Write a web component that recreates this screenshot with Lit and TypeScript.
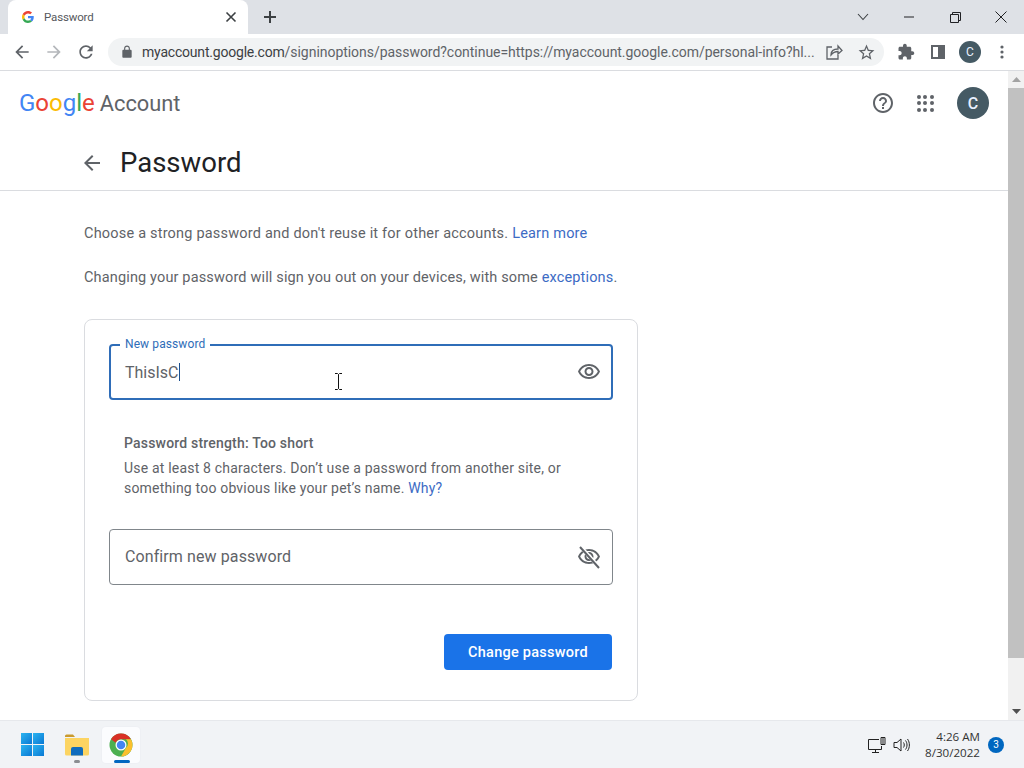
import { LitElement, html, css } from 'lit'
import { customElement } from 'lit/decorators.js'

const P = {
  back: 'M20 11H7.83l5.59-5.59L12 4l-8 8 8 8 1.41-1.41L7.83 13H20v-2z',
  forward: 'M12 4l-1.41 1.41L16.17 11H4v2h12.17l-5.58 5.59L12 20l8-8z',
  reload: 'M17.65 6.35C16.2 4.9 14.21 4 12 4c-4.42 0-7.99 3.58-7.99 8s3.57 8 7.99 8c3.73 0 6.84-2.55 7.73-6h-2.08c-.82 2.33-3.04 4-5.65 4-3.31 0-6-2.69-6-6s2.69-6 6-6c1.66 0 3.14.69 4.22 1.78L13 11h7V4l-2.35 2.35z',
  lock: 'M18 8h-1V6c0-2.76-2.24-5-5-5S7 3.24 7 6v2H6c-1.1 0-2 .9-2 2v10c0 1.1.9 2 2 2h12c1.1 0 2-.9 2-2V10c0-1.1-.9-2-2-2zM9 6c0-1.66 1.34-3 3-3s3 1.34 3 3v2H9V6z',
  star: 'M22 9.24l-7.19-.62L12 2 9.19 8.63 2 9.24l5.46 4.73L5.82 21 12 17.27 18.18 21l-1.63-7.03L22 9.24zM12 15.4l-3.76 2.27 1-4.28-3.32-2.88 4.38-.38L12 6.1l1.71 4.04 4.38.38-3.32 2.88 1 4.28L12 15.4z',
  ext: 'M20.5 11H19V7c0-1.1-.9-2-2-2h-4V3.5C13 2.12 11.88 1 10.5 1S8 2.12 8 3.5V5H4c-1.1 0-1.99.9-1.99 2v3.8H3.5c1.49 0 2.7 1.21 2.7 2.7s-1.21 2.7-2.7 2.7H2V20c0 1.1.9 2 2 2h3.8v-1.5c0-1.49 1.21-2.7 2.7-2.7 1.49 0 2.7 1.21 2.7 2.7V22H17c1.1 0 2-.9 2-2v-4h1.5c1.38 0 2.5-1.12 2.5-2.5S21.88 11 20.5 11z',
  help: 'M11 18h2v-2h-2v2zm1-16C6.48 2 2 6.48 2 12s4.48 10 10 10 10-4.48 10-10S17.52 2 12 2zm0 18c-4.41 0-8-3.59-8-8s3.59-8 8-8 8 3.59 8 8-3.59 8-8 8zm0-14c-2.21 0-4 1.79-4 4h2c0-1.1.9-2 2-2s2 .9 2 2c0 2-3 1.75-3 5h2c0-2.25 3-2.5 3-5 0-2.21-1.79-4-4-4z',
  eye: 'M12 6c3.79 0 7.17 2.13 8.82 5.5C19.17 14.87 15.79 17 12 17s-7.17-2.13-8.82-5.5C4.83 8.13 8.21 6 12 6m0-2C7 4 2.73 7.11 1 11.5 2.73 15.89 7 19 12 19s9.27-3.11 11-7.5C21.27 7.11 17 4 12 4zm0 5c1.38 0 2.5 1.12 2.5 2.5S13.38 14 12 14s-2.5-1.12-2.5-2.5S10.62 9 12 9m0-2c-2.48 0-4.5 2.02-4.5 4.5S9.52 16 12 16s4.5-2.02 4.5-4.5S14.48 7 12 7z',
}

const icon = (d: string, size: number, color: string) => html`<svg width=${size} height=${size} viewBox="0 0 24 24" fill=${color}><path d=${d}></path></svg>`

const gLogo = (size: number) => html`<svg width=${size} height=${size} viewBox="0 0 48 48">
  <path fill="#EA4335" d="M24 9.5c3.54 0 6.71 1.22 9.21 3.6l6.85-6.85C35.9 2.38 30.47 0 24 0 14.62 0 6.51 5.38 2.56 13.22l7.98 6.19C12.43 13.72 17.74 9.5 24 9.5z"></path>
  <path fill="#4285F4" d="M46.98 24.55c0-1.57-.15-3.09-.38-4.55H24v9.02h12.94c-.58 2.96-2.26 5.48-4.78 7.18l7.73 6c4.51-4.18 7.09-10.36 7.09-17.65z"></path>
  <path fill="#FBBC05" d="M10.53 28.59c-.48-1.45-.76-2.99-.76-4.59s.27-3.14.76-4.59l-7.98-6.19C.92 16.46 0 20.12 0 24c0 3.88.92 7.54 2.56 10.78l7.97-6.19z"></path>
  <path fill="#34A853" d="M24 48c6.48 0 11.93-2.13 15.89-5.81l-7.73-6c-2.15 1.45-4.92 2.3-8.16 2.3-6.26 0-11.57-4.22-13.47-9.91l-7.98 6.19C6.51 42.62 14.62 48 24 48z"></path>
</svg>`

const eyeOff = html`<svg width="24" height="24" viewBox="0 0 24 24" fill="#5f6368">
  <path d=${P.eye}></path>
  <path d="M3.5 1.5l18 20" stroke="#fff" stroke-width="3.5" fill="none"></path>
  <path d="M3 2l19 21" stroke="#5f6368" stroke-width="2" fill="none"></path>
</svg>`

const chromeIcon = html`<svg width="24" height="24" viewBox="0 0 48 48">
  <circle cx="24" cy="24" r="23" fill="#4caf50"></circle>
  <path fill="#d93025" d="M24 1a23 23 0 0 1 19.9 11.5H24a11.5 11.5 0 0 0-10.5 6.9L4.1 12.5A23 23 0 0 1 24 1z"></path>
  <path fill="#fbc02d" d="M43.9 12.5A23 23 0 0 1 24 47l10-17.3a11.5 11.5 0 0 0 0-17.2z"></path>
  <circle cx="24" cy="24" r="11" fill="#fff"></circle>
  <circle cx="24" cy="24" r="8.5" fill="#4285f4"></circle>
</svg>`

@customElement('app-root')
export class AppRoot extends LitElement {
  static styles = css`
    :host {
      display: flex;
      flex-direction: column;
      width: 1024px;
      height: 768px;
      overflow: hidden;
      background: #fff;
      font-family: Roboto, "Liberation Sans", sans-serif;
      color: #5f6368;
    }
    svg { display: block; flex: none; }

    .tabstrip {
      display: flex;
      align-items: flex-end;
      height: 34px;
      background: #dee1e6;
      padding-left: 8px;
      flex: none;
    }
    .tab {
      display: flex;
      align-items: center;
      width: 240px;
      height: 34px;
      box-sizing: border-box;
      padding: 0 9px 0 14px;
      gap: 10px;
      background: #fff;
      border-radius: 8px 8px 0 0;
      font-size: 11.5px;
      letter-spacing: -0.15px;
      color: #55585c;
    }
    .tab-title { flex: 1; }
    .new-tab { margin-left: 12px; align-self: center; }
    .win-controls {
      margin-left: auto;
      display: flex;
      align-items: center;
      align-self: center;
    }
    .win-btn { width: 46px; display: flex; justify-content: center; }

    .toolbar {
      display: flex;
      align-items: center;
      height: 37px;
      box-sizing: border-box;
      background: #fff;
      border-bottom: 1px solid #dadce0;
      padding-left: 6px;
      flex: none;
    }
    .tool { width: 32px; display: flex; justify-content: center; align-items: center; flex: none; }
    .omnibox {
      display: flex;
      align-items: center;
      width: 776px;
      height: 28px;
      box-sizing: border-box;
      margin-left: 6px;
      margin-right: 6px;
      padding: 0 2px 0 12px;
      background: #f1f3f4;
      border-radius: 14px;
      flex: none;
    }
    .url {
      flex: 1;
      margin-left: 8px;
      font-size: 14px;
      letter-spacing: -0.04px;
      color: #5f6368;
      white-space: nowrap;
    }
    .url b { font-weight: 400; color: #3c4043; letter-spacing: -0.2px; }
    .mini-avatar {
      width: 22px;
      height: 22px;
      border-radius: 50%;
      background: #455a64;
      color: #e8f0fe;
      font-size: 12px;
      display: flex;
      align-items: center;
      justify-content: center;
    }

    .main { flex: 1; display: flex; min-height: 0; }
    .page { flex: 1; min-width: 0; }

    .account-bar {
      display: flex;
      align-items: center;
      height: 64px;
      padding: 0 19px 0 19px;
    }
    .logo {
      display: flex;
      align-items: baseline;
      font-size: 24px;
      line-height: 32px;
      white-space: nowrap;
    }
    .logo .b { color: #4285f4; }
    .logo .r { color: #ea4335; }
    .logo .y { color: #fbbc05; }
    .logo .g { color: #34a853; }
    .account-word {
      font-size: 21.8px;
      margin-left: 5px;
      color: #5f6368;
    }
    .bar-icons { margin-left: auto; display: flex; align-items: center; }
    .apps {
      display: grid;
      grid-template-columns: repeat(3, 4px);
      gap: 2.5px;
      margin: 0 23.5px 0 21.5px;
    }
    .apps i { width: 4px; height: 4px; border-radius: 50%; background: #5f6368; }
    .avatar {
      width: 32px;
      height: 32px;
      border-radius: 50%;
      background: #455a64;
      color: #e8f0fe;
      font-size: 16px;
      font-weight: 500;
      display: flex;
      align-items: center;
      justify-content: center;
    }

    .title-row {
      display: flex;
      align-items: center;
      height: 55px;
      padding-left: 80px;
      border-bottom: 1px solid #dadce0;
    }
    .title-row h1 {
      margin: 0 0 0 16px;
      font-size: 27.5px;
      font-weight: 400;
      color: #202124;
    }

    .content { padding: 33px 0 0 84px; }
    .intro {
      margin: 0 0 24px;
      font-size: 14.5px;
      letter-spacing: 0.2px;
      line-height: 20px;
      color: #5f6368;
    }
    .intro.second { letter-spacing: 0.15px; }
    a { color: #3c6bc4; text-decoration: none; }

    .card {
      width: 554px;
      height: 382px;
      box-sizing: border-box;
      margin-top: 31px;
      border: 1px solid #dadce0;
      border-radius: 8px;
      padding: 24px 24px 0;
    }
    .field {
      position: relative;
      display: flex;
      align-items: center;
      height: 56px;
      box-sizing: border-box;
      padding: 0 11px 0 15px;
      border: 1px solid #80868b;
      border-radius: 4px;
      font-size: 16px;
      color: #5f6368;
    }
    .field.focused { border: 2px solid #2f6db8; padding: 0 10px 0 14px; }
    .field-text { flex: 1; }
    .confirm .field-text { letter-spacing: 0.1px; margin-bottom: 2px; }
    .caret { display: inline-block; width: 1px; height: 18px; background: #1a4f8f; vertical-align: -3px; }
    .float-label {
      position: absolute;
      top: -10px;
      left: 9px;
      padding: 0 5px;
      background: #fff;
      font-size: 12px;
      letter-spacing: 0.1px;
      line-height: 16px;
      color: #2f6db8;
    }
    .ibeam { position: absolute; left: 223px; top: 27px; }

    .hint { margin: 33px 0 0 15px; width: 460px; font-size: 14px; letter-spacing: 0.19px; line-height: 20px; }
    .hint strong { display: block; font-weight: 500; margin-bottom: 5px; }
    .confirm { margin-top: 31px; }
    .actions { display: flex; justify-content: flex-end; margin-top: 49px; padding-right: 1px; }
    .primary {
      width: 168px;
      height: 36px;
      border: 0;
      border-radius: 4px;
      background: #1a73e8;
      color: #fff;
      font: 500 14.5px Roboto, sans-serif;
      letter-spacing: 0.25px;
    }

    .scrollbar {
      width: 16px;
      background: #f1f1f1;
      display: flex;
      flex-direction: column;
      align-items: center;
      flex: none;
    }
    .arrow { height: 17px; display: flex; align-items: center; justify-content: center; flex: none; }
    .thumb { width: 16px; height: 570px; background: #c1c1c1; }
    .scroll-gap { flex: 1; }

    .taskbar {
      display: flex;
      align-items: center;
      height: 48px;
      background: #f1f3f6;
      border-top: 1px solid #e6e8ec;
      box-sizing: border-box;
      padding: 0 20px 0 14px;
      flex: none;
    }
    .task {
      position: relative;
      width: 38px;
      height: 36px;
      margin-right: 6px;
      display: flex;
      align-items: center;
      justify-content: center;
    }
    .task.active { background: #fbfcfe; border-radius: 4px; box-shadow: 0 0 0 1px #eef0f4; }
    .indicator { position: absolute; bottom: 0; left: 12px; width: 16px; height: 3px; border-radius: 2px; background: #0067c0; }
    .indicator.idle { left: 16px; width: 6px; background: #8a8d91; }
    .winlogo { display: grid; grid-template-columns: 11px 11px; gap: 1px; margin-left: -2px; }
    .winlogo i { height: 11px; background: linear-gradient(135deg, #2bb4f0, #0a78d4); }
    .tray { margin-left: auto; display: flex; align-items: center; }
    .speaker { margin-left: 6px; }
    .clock { margin-left: 15px; text-align: right; font-size: 11.6px; line-height: 16px; color: #333; font-family: "Open Sans", sans-serif; }
    .badge {
      width: 16px;
      height: 16px;
      margin-left: 8px;
      border-radius: 50%;
      background: #0067c0;
      color: #fff;
      font-size: 10px;
      display: flex;
      align-items: center;
      justify-content: center;
    }
  `

  private apps() {
    return Array.from({ length: 9 }, () => html`<i></i>`)
  }

  render() {
    return html`
      <div class="tabstrip">
        <div class="tab">
          ${gLogo(12)}
          <span class="tab-title">Password</span>
          <svg width="16" height="16" viewBox="0 0 16 16"><path d="M3.5 3.5l9 9M12.5 3.5l-9 9" stroke="#3c4043" stroke-width="1.6"></path></svg>
        </div>
        <svg class="new-tab" width="20" height="20" viewBox="0 0 20 20"><path d="M10 4v12M4 10h12" stroke="#3c4043" stroke-width="2"></path></svg>
        <div class="win-controls">
          <div class="win-btn"><svg width="12" height="8" viewBox="0 0 12 8"><path d="M1 1l5 5.5L11 1" fill="none" stroke="#3c4043" stroke-width="1.1"></path></svg></div>
          <div class="win-btn"><svg width="10" height="2" viewBox="0 0 10 2"><path d="M0 1h10" stroke="#202124"></path></svg></div>
          <div class="win-btn"><svg width="11" height="11" viewBox="0 0 11 11"><path d="M.5 2.5h8v8h-8zM2.5 2.5v-2h8v8h-2" fill="none" stroke="#202124"></path></svg></div>
          <div class="win-btn"><svg width="12" height="12" viewBox="0 0 12 12"><path d="M.5.5l11 11M11.5.5l-11 11" stroke="#202124" stroke-width="1"></path></svg></div>
        </div>
      </div>

      <div class="toolbar">
        <div class="tool">${icon(P.back, 20, '#5f6368')}</div>
        <div class="tool">${icon(P.forward, 20, '#b4b7bb')}</div>
        <div class="tool">${icon(P.reload, 20, '#5f6368')}</div>
        <div class="omnibox">
          ${icon(P.lock, 14, '#5f6368')}
          <div class="url"><b>myaccount.google.com</b>/signinoptions/password?continue=https://myaccount.google.com/personal-info?hl...</div>
          <div class="tool">
            <svg width="18" height="18" viewBox="0 0 18 18" fill="none" stroke="#5f6368" stroke-width="1.3"><path d="M7 4H2v12h11v-4"></path><path d="M6 12c0-4 3-6 7-6V3l4 4.5L13 11V8.5c-3 0-5 1-7 3.5z"></path></svg>
          </div>
          <div class="tool">${icon(P.star, 19, '#5f6368')}</div>
        </div>
        <div class="tool">${icon(P.ext, 18, '#5f6368')}</div>
        <div class="tool"><svg width="14" height="14" viewBox="0 0 14 14"><path d="M0 0h14v14H0z" fill="#5f6368"></path><path d="M2 2h5v10H2z" fill="#fff"></path></svg></div>
        <div class="tool"><div class="mini-avatar">C</div></div>
        <div class="tool"><svg width="4" height="14" viewBox="0 0 4 14" fill="#5f6368"><circle cx="2" cy="2" r="1.6"></circle><circle cx="2" cy="7" r="1.6"></circle><circle cx="2" cy="12" r="1.6"></circle></svg></div>
      </div>

      <div class="main">
        <div class="page">
          <div class="account-bar">
            <div class="logo"><span class="b">G</span><span class="r">o</span><span class="y">o</span><span class="b">g</span><span class="g">l</span><span class="r">e</span><span class="account-word">Account</span></div>
            <div class="bar-icons">
              ${icon(P.help, 24, '#5f6368')}
              <div class="apps">${this.apps()}</div>
              <div class="avatar">C</div>
            </div>
          </div>
          <div class="title-row">
            ${icon(P.back, 24, '#5f6368')}
            <h1>Password</h1>
          </div>
          <div class="content">
            <p class="intro">Choose a strong password and don't reuse it for other accounts. <a>Learn more</a></p>
            <p class="intro second">Changing your password will sign you out on your devices, with some <a>exceptions</a>.</p>
            <div class="card">
              <div class="field focused">
                <span class="float-label">New password</span>
                <span class="field-text">ThisIsC<span class="caret"></span></span>
                ${icon(P.eye, 24, '#5f6368')}
                <svg class="ibeam" width="9" height="17" viewBox="0 0 9 17" fill="none" stroke="#111"><path d="M1 .5h2.5l1 1 1-1H8M4.5 1.5v14M1 16.5h2.5l1-1 1 1H8"></path></svg>
              </div>
              <div class="hint">
                <strong>Password strength: Too short</strong>
                <div>Use at least 8 characters. Don’t use a password from another site, or</div>
                <div><span>something too obvious like your pet’s name.</span> <a>Why?</a></div>
              </div>
              <div class="field confirm">
                <span class="field-text">Confirm new password</span>
                ${eyeOff}
              </div>
              <div class="actions"><button class="primary">Change password</button></div>
            </div>
          </div>
        </div>
        <div class="scrollbar">
          <div class="arrow"><svg width="9" height="5" viewBox="0 0 9 5"><path d="M4.5 0L9 5H0z" fill="#a3a3a3"></path></svg></div>
          <div class="thumb"></div>
          <div class="scroll-gap"></div>
          <div class="arrow"><svg width="9" height="5" viewBox="0 0 9 5"><path d="M0 0h9L4.5 5z" fill="#505050"></path></svg></div>
        </div>
      </div>

      <div class="taskbar">
        <div class="task"><div class="winlogo"><i></i><i></i><i></i><i></i></div></div>
        <div class="task">
          <svg width="26" height="24" viewBox="0 0 26 24"><path d="M1 3a1.5 1.5 0 0 1 1.5-1.5H9L11 4H1z" fill="#c99a2e"></path><path d="M1 5h24v16a1.5 1.5 0 0 1-1.5 1.5h-21A1.5 1.5 0 0 1 1 21z" fill="#fcd462"></path><path d="M7 16a2 2 0 0 1 2-2h8a2 2 0 0 1 2 2v6.5H7z" fill="#0f6cbd"></path></svg>
          <span class="indicator idle"></span>
        </div>
        <div class="task active">${chromeIcon}<span class="indicator"></span></div>
        <div class="tray">
          <svg width="20" height="18" viewBox="0 0 20 18" fill="none" stroke="#222"><path d="M12 3.5H1.5v10h13V10M5 16.5h7M8.5 13.5v3"></path><path d="M14 1.5h4v7h-4zM16 1.5v7"></path></svg>
          <svg class="speaker" width="17" height="16" viewBox="0 0 17 16" fill="none" stroke="#222"><path d="M1 5.5h3L8 2v12l-4-3.5H1z"></path><path d="M10.5 5.5c1 1.5 1 3.500 0 5M12.5 3.500c2 2.500 2 6.500 0 9M14.500 2c2.500 3.500 2.500 8.500 0 12"></path></svg>
          <div class="clock">4:26 AM<br />8/30/2022</div>
          <div class="badge">3</div>
        </div>
      </div>
    `
  }
}
